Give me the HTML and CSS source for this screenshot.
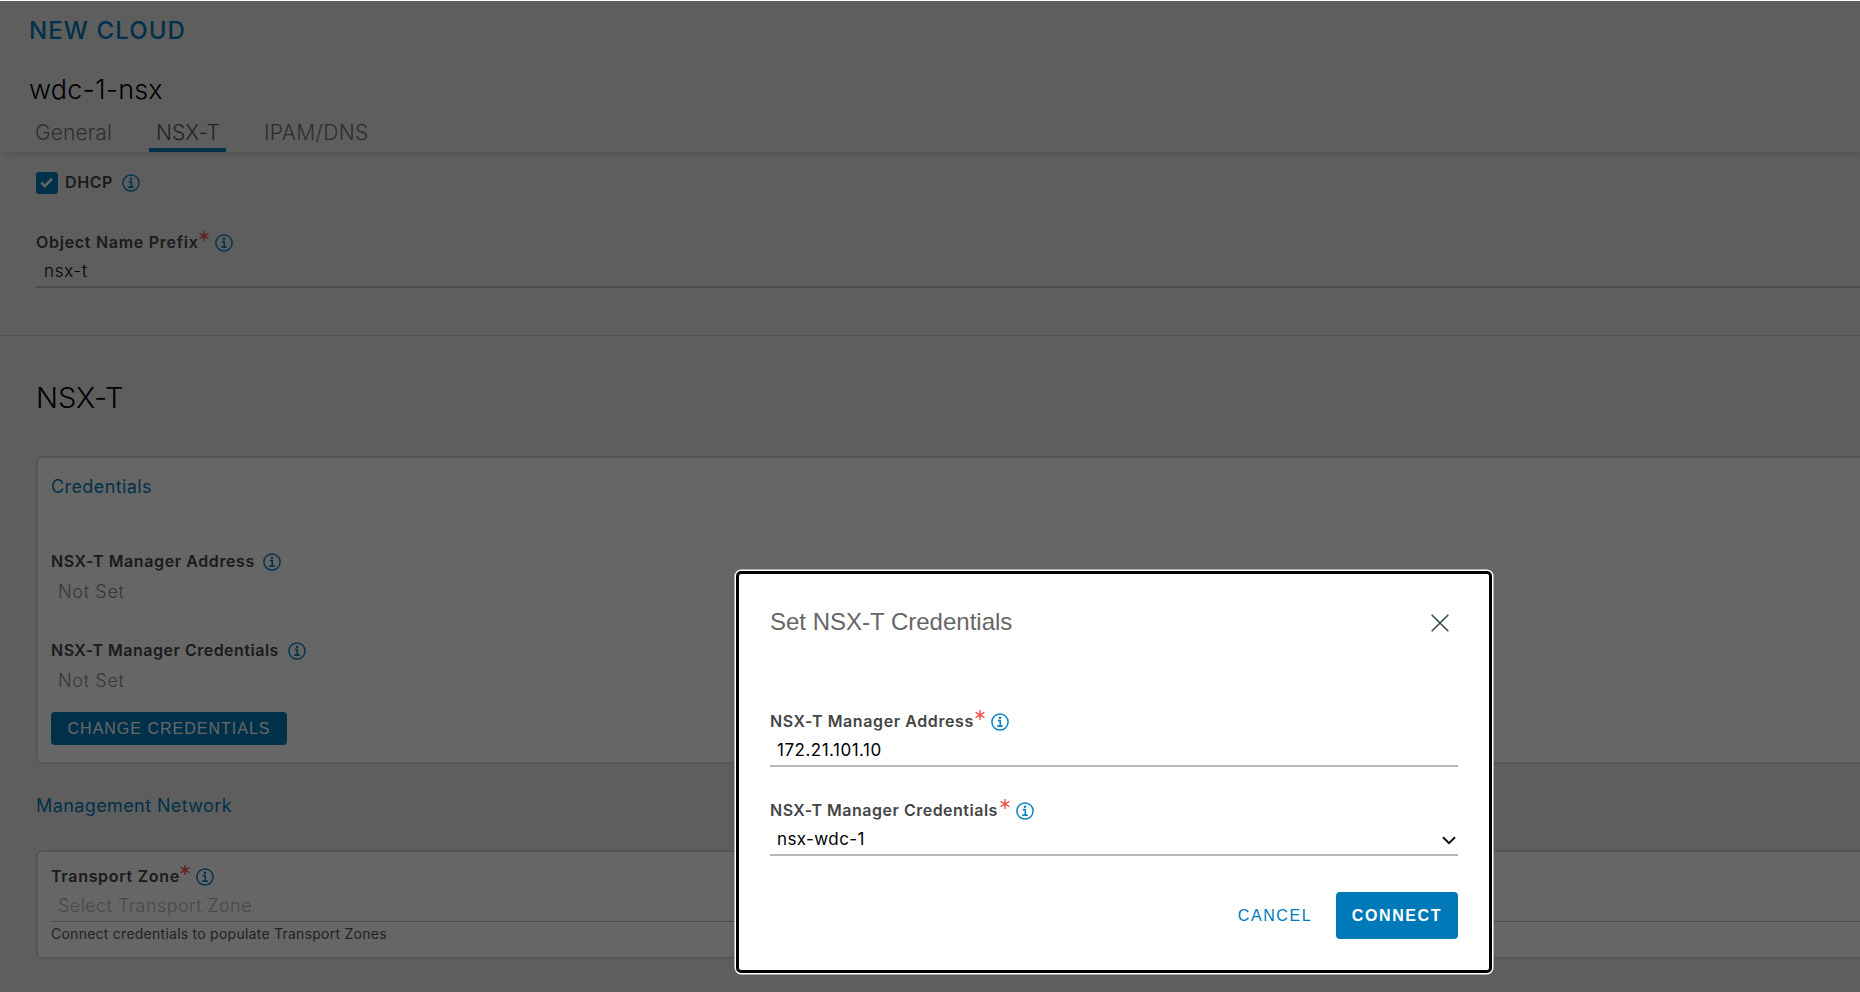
FILE: index.html
```html
<!DOCTYPE html>
<html lang="en">
<head>
<meta charset="utf-8">
<title>New Cloud</title>
<link rel="stylesheet" href="styles.css">
</head>
<body>
<svg class="defs" width="0" height="0">
  <symbol id="info" viewBox="0 0 18 18"><circle cx="9" cy="9" r="8.1" fill="none" stroke="currentColor" stroke-width="1.5"/><circle cx="9" cy="4.8" r="1.3" fill="currentColor"/><path d="M6.8 7.6h2.5v5.4M6.2 13.1h5.6" fill="none" stroke="currentColor" stroke-width="1.6"/></symbol>
  <symbol id="star" viewBox="0 0 10 10"><path d="M5 0v10M.6 2.4l8.8 5.2M9.4 2.4L.6 7.6" fill="none" stroke="currentColor" stroke-width="1.4"/></symbol>
</svg>
<main class="page">
  <header class="header">
    <h1 class="title">NEW CLOUD</h1>
    <h2 class="name">wdc-1-nsx</h2>
    <nav class="tabs">
      <a class="tab tab-general"><span>General</span></a>
      <a class="tab tab-nsx active"><span>NSX-T</span></a>
      <a class="tab tab-ipam"><span>IPAM/DNS</span></a>
    </nav>
  </header>
  <section class="basics">
    <div class="check-row">
      <span class="checkbox"><svg viewBox="0 0 22 22"><path d="M5.3 10.5l3.6 3.6 7-7.4" fill="none" stroke="#fff" stroke-width="2.5"/></svg></span>
      <span class="label dhcp">DHCP</span><svg class="info"><use href="#info"/></svg>
    </div>
    <div class="field">
      <div class="label-row"><span class="label opn">Object Name Prefix</span><svg class="star"><use href="#star"/></svg><svg class="info"><use href="#info"/></svg></div>
      <div class="value line"><span class="v-prefix">nsx-t</span></div>
    </div>
  </section>
  <section class="nsx">
    <h3 class="heading">NSX-T</h3>
    <div class="card creds">
      <h4 class="sub s-cred">Credentials</h4>
      <div class="field f1">
        <div class="label-row"><span class="label l-addr">NSX-T Manager Address</span><svg class="info"><use href="#info"/></svg></div>
        <div class="value muted"><span>Not Set</span></div>
      </div>
      <div class="field f2">
        <div class="label-row"><span class="label l-cred">NSX-T Manager Credentials</span><svg class="info"><use href="#info"/></svg></div>
        <div class="value muted"><span>Not Set</span></div>
      </div>
      <button class="btn change">CHANGE CREDENTIALS</button>
    </div>
    <h4 class="sub s-mgmt">Management Network</h4>
    <div class="card zone">
      <div class="label-row"><span class="label l-zone">Transport Zone</span><svg class="star"><use href="#star"/></svg><svg class="info"><use href="#info"/></svg></div>
      <div class="value placeholder line"><span>Select Transport Zone</span></div>
      <p class="help">Connect credentials to populate Transport Zones</p>
    </div>
  </section>
</main>
<div class="overlay"></div>
<div class="modal" role="dialog">
  <div class="modal-head">
    <h2 class="modal-title">Set NSX-T Credentials</h2>
    <svg class="close" viewBox="0 0 18 18"><path d="M.7.7l16.6 16.6M17.3.7L.7 17.3" stroke="#304250" stroke-width="1.5"/></svg>
  </div>
  <div class="field m1">
    <div class="label-row"><span class="label l-addr">NSX-T Manager Address</span><svg class="star"><use href="#star"/></svg><svg class="info"><use href="#info"/></svg></div>
    <div class="value line"><span class="v-ip">172.21.101.10</span></div>
  </div>
  <div class="field m2">
    <div class="label-row"><span class="label l-cred">NSX-T Manager Credentials</span><svg class="star"><use href="#star"/></svg><svg class="info"><use href="#info"/></svg></div>
    <div class="value line"><span class="v-wdc">nsx-wdc-1</span><svg class="chev" viewBox="0 0 14 9"><path d="M1 1.2l6 6 6-6" fill="none" stroke="#111" stroke-width="2"/></svg></div>
  </div>
  <div class="actions">
    <button class="btn cancel">CANCEL</button>
    <button class="btn connect">CONNECT</button>
  </div>
</div>
</body>
</html>
```
FILE: styles.css
```css
* { box-sizing: border-box; margin: 0; padding: 0; }
html, body { height: 100%; overflow: hidden; }
body { background: #fff; color: #000; font-family: Inter, sans-serif; padding-top: 1px; }
h1, h2, h3, h4 { font-weight: 400; }
span, h1, h2, p { white-space: nowrap; }
.defs { display: block; position: absolute; }
.page { height: 991px; background: #ececec; overflow: hidden; }
.header { position: relative; height: 151px; background: #ececec; box-shadow: 5px 2px 7px rgba(0,0,0,.15); }
.title { padding: 15px 0 0 29px; height: 60px; font: 500 24px/30px Inter, sans-serif; letter-spacing: 1.1px; color: #0079b8; }
.name { padding-left: 29px; height: 55px; font: 300 27px/57px Inter, sans-serif; letter-spacing: .2px; }
.tabs { display: flex; height: 36px; padding-left: 29px; }
.tab { height: 36px; font: 300 21px/33px Inter, sans-serif; letter-spacing: .1px; color: #737373; padding: 0 6px; }
.tab-general { width: 120px; }
.tab-nsx { width: 77px; padding-left: 7px; color: #565656; border-bottom: 4px solid #0079b8; }
.tab-ipam { padding-left: 38px; letter-spacing: .35px; }
.basics { height: 184px; padding: 20px 0 0 36px; border-bottom: 1px solid #c8c8c8; }
.check-row { display: flex; align-items: center; height: 22px; margin-bottom: 37px; }
.checkbox { width: 22px; height: 22px; border-radius: 3px; background: #0079b8; margin-right: 7px; }
.checkbox svg { display: block; }
.label { font: 600 16px/23px Inter, sans-serif; height: 24px; letter-spacing: .6px; color: #454545; }
.dhcp { width: 57px; }
.info { width: 18px; height: 18px; color: #0e83c4; flex: none; }
.label-row { display: flex; align-items: center; height: 24px; }
.l-addr { width: 205px; }
.l-cred { width: 230px; letter-spacing: .5px; }
.opn { width: 163px; letter-spacing: .72px; }
.l-zone { width: 129px; letter-spacing: .7px; }
.creds .info { margin-left: 7px; }
.star { width: 10px; height: 10px; margin-right: 6px; color: #f54f47; align-self: flex-start; margin-top: 0; flex: none; }
.value { height: 33px; padding: 1px 0 0 8px; font: 400 17px/32px Inter, sans-serif; display: flex; justify-content: space-between; align-items: center; }
.v-prefix { letter-spacing: .7px; font-weight: 300; }
.modal .v-ip { letter-spacing: .5px; }
.v-wdc { letter-spacing: .4px; }
.line { border-bottom: 2px solid #b9b9b9; }
.muted { color: #8c8c8c; font-weight: 300; font-size: 18px; letter-spacing: .65px; padding-left: 7px; padding-top: 2px; }
.placeholder { color: #b4b4b4; font-weight: 300; font-size: 18px; letter-spacing: .42px; padding-left: 7px; }
.nsx { padding-left: 36px; }
.heading { height: 120px; padding-top: 42px; font: 300 29px/40px Inter, sans-serif; letter-spacing: -.1px; }
.card { background: #fff; border: 2px solid #d8d8d8; border-right: 0; border-radius: 6px 0 0 6px; padding-left: 13px; }
.sub { font: 400 18px/24px Inter, sans-serif; letter-spacing: .4px; color: #0079b8; }
.creds { height: 308px; padding-top: 17px; }
.s-cred { height: 75px; }
.f1 { height: 89px; }
.f2 { height: 73px; }
.btn { border: 0; border-radius: 4px; background: #0079b8; color: #fff; font: 400 16px/20px "Liberation Sans", sans-serif; display: flex; align-items: center; justify-content: center; letter-spacing: 1.6px; white-space: nowrap; }
.change { width: 236px; height: 33px; letter-spacing: 1px; }
.s-mgmt { height: 86px; padding-top: 30px; }
.zone { height: 109px; padding-top: 13px; }
.zone .line { border-bottom-width: 1px; }
.help { font: 400 14px/20px Inter, sans-serif; letter-spacing: .25px; color: #565656; padding-top: 2px; }
.overlay { position: absolute; left: 0; right: 0; top: 1px; bottom: 0; background: rgba(0,0,0,.6); }
.modal { position: absolute; left: 736px; top: 571px; width: 756px; height: 402px; background: #fff; border: 3px solid #000; border-radius: 5px; box-shadow: 0 0 0 1.5px #fff; padding: 0 31px; }
.modal-head { display: flex; justify-content: space-between; padding: 33px 9px 0 0; height: 136px; }
.modal-title { font: 400 24px/30px "Liberation Sans", sans-serif; color: #666; }
.close { width: 18px; height: 18px; margin-top: 7px; }
.m1 { height: 89px; }
.m2 { height: 88px; }
.modal .value { padding-left: 7px; padding-top: 0; }
.chev { width: 14px; height: 9px; margin-right: 2px; margin-top: 4px; }
.actions { display: flex; justify-content: flex-end; align-items: center; padding-top: 5px; }
.cancel { background: none; color: #0079b8; width: 122px; height: 47px; }
.connect { width: 122px; height: 47px; font-weight: 700; }
```
